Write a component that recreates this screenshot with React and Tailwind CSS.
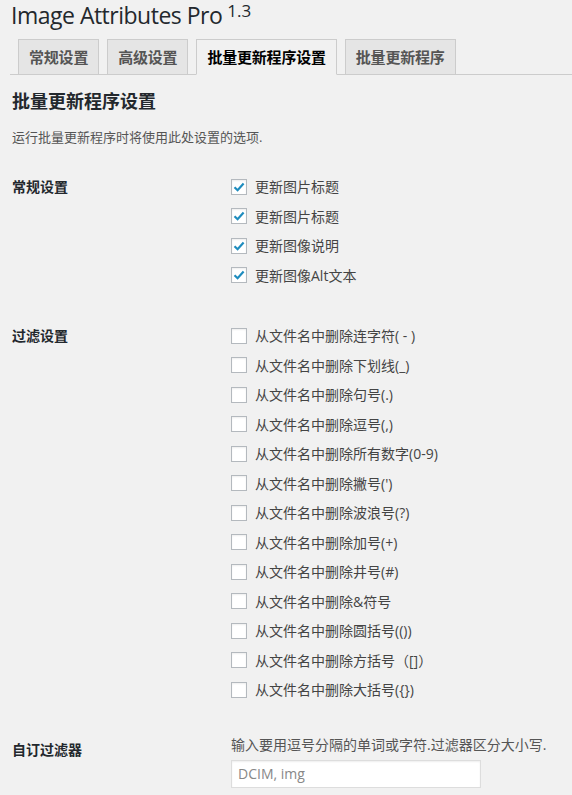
import React from 'react';

const generalOptions = ['更新图片标题', '更新图片标题', '更新图像说明', '更新图像Alt文本'];

const filterOptions = [
  '从文件名中删除连字符( - )',
  '从文件名中删除下划线(_)',
  '从文件名中删除句号(.)',
  '从文件名中删除逗号(,)',
  '从文件名中删除所有数字(0-9)',
  "从文件名中删除撇号(')",
  '从文件名中删除波浪号(?)',
  '从文件名中删除加号(+)',
  '从文件名中删除井号(#)',
  '从文件名中删除&符号',
  '从文件名中删除圆括号(())',
  '从文件名中删除方括号（[]）',
  '从文件名中删除大括号({})',
];

const tabs = [
  { label: '常规设置', active: false },
  { label: '高级设置', active: false },
  { label: '批量更新程序设置', active: true },
  { label: '批量更新程序', active: false },
];

const Checkbox = ({ checked }) => (
  <span className="flex h-4 w-4 shrink-0 items-center justify-center border border-[#b4b9be] bg-white shadow-[inset_0_1px_2px_rgba(0,0,0,0.07)]">
    {checked && (
      <svg width="12" height="12" viewBox="0 0 12 12">
        <path d="M1.5 6.2 L4.6 9.2 L10.6 2.6" fill="none" stroke="#1e8cbe" strokeWidth="2.2" />
      </svg>
    )}
  </span>
);

const OptionRow = ({ label, checked }) => (
  <label className="flex h-[29.5px] items-center gap-2 text-[14px] text-[#444]">
    <Checkbox checked={checked} />
    <span>{label}</span>
  </label>
);

const Section = ({ title, children, className }) => (
  <div className={`flex ${className || ''}`}>
    <div className="w-[219px] shrink-0 pt-[5px] text-[14px] font-bold leading-[20px] text-[#23282d]">{title}</div>
    <div className="flex flex-col">{children}</div>
  </div>
);

export default function App() {
  return (
    <div className="min-h-screen bg-[#f1f1f1] pl-[10px] font-['Open_Sans','Noto_Sans_CJK_SC',sans-serif] text-[#444]">
      <h1 className="pl-[1px] pt-[2px] text-[23px] font-normal leading-[26px] tracking-[-0.5px] text-[#23282d]">
        Image Attributes Pro<sup className="relative -top-[7px] ml-[5px] text-[17px] leading-none tracking-normal">1.3</sup>
      </h1>

      <nav className="mt-[11px] flex gap-2 border-b border-[#ccc] pl-2">
        {tabs.map((tab) => (
          <div
            key={tab.label}
            className={`-mb-px flex h-[36px] items-center border border-[#ccc] px-[10px] text-[15px] font-bold tracking-[-0.2px] ${
              tab.active ? 'border-b-[#f1f1f1] bg-[#f1f1f1] text-black' : 'bg-[#e5e5e5] text-[#555]'
            }`}
          >
            {tab.label}
          </div>
        ))}
      </nav>

      <div className="pl-[2px]">
        <h2 className="mt-[14px] text-[18px] font-bold leading-[24px] text-[#23282d]">批量更新程序设置</h2>
        <p className="mt-[14px] text-[13px] leading-[20px] text-[#555]">运行批量更新程序时将使用此处设置的选项.</p>

        <Section title="常规设置" className="mt-[25px]">
          {generalOptions.map((o, i) => (
            <OptionRow key={i} label={o} checked />
          ))}
        </Section>

        <Section title="过滤设置" className="mt-[31px]">
          {filterOptions.map((o, i) => (
            <OptionRow key={i} label={o} />
          ))}
        </Section>

        <Section title="自订过滤器" className="mt-[30px]">
          <p className="text-[14px] leading-[20px] text-[#555]">输入要用逗号分隔的单词或字符.过滤器区分大小写.</p>
          <input
            type="text"
            placeholder="DCIM, img"
            className="mt-[5px] h-[28px] w-[250px] border border-[#ddd] bg-white px-[6px] text-[14px] text-[#32373c] shadow-[inset_0_1px_2px_rgba(0,0,0,0.07)] placeholder:text-[#888] outline-none"
          />
        </Section>
      </div>
    </div>
  );
}
